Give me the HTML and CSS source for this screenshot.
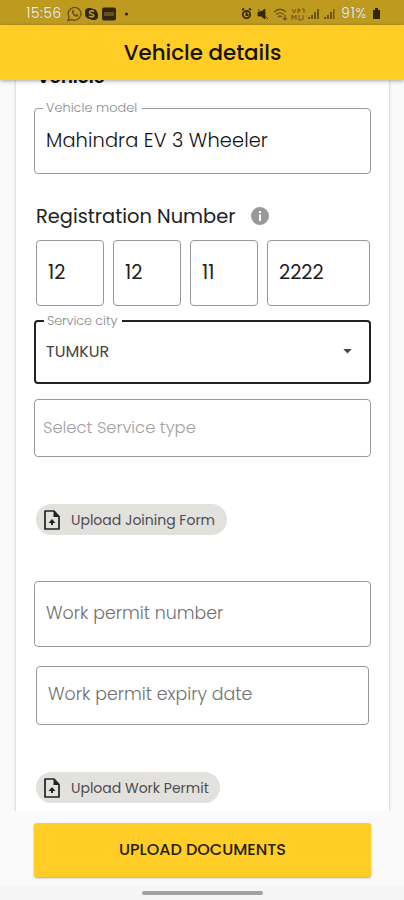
FILE: index.html
```html
<!DOCTYPE html>
<html lang="en">
<head>
<meta charset="utf-8">
<meta name="viewport" content="width=device-width, initial-scale=1">
<title>Vehicle details</title>
<link rel="stylesheet" href="styles.css">
</head>
<body>
<div class="status">
  <span class="clock">15:56</span>
  <svg class="apps" width="68" height="16" viewBox="0 0 68 16">
    <path d="M1 14.5 2 11A6.4 6.4 0 1 1 4.6 13.5Z" fill="none" stroke="#65511b" stroke-width="1.3"/>
    <path d="M5 4.5C4.3 7.5 7.3 11 10.5 10.7l1-1.6-2-1-1 .9C7.5 8.500 6.700 7.500 6.500 6.600l.8-.9-.8-1.700Z" fill="#65511b"/>
    <rect x="18" y="2" width="9" height="10" rx="4" fill="#33270c"/><rect x="22" y="5" width="9" height="9" rx="4" fill="#33270c"/><rect x="19" y="3" width="11" height="10" rx="4" fill="#33270c"/>
    <path d="M27 5.500C24.500 4 22 5 22.500 6.700c.5 1.500 4 .9 4.200 2.700.2 1.700-2.800 2-4.700.6" fill="none" stroke="#c8a42a" stroke-width="1.500"/>
    <rect x="35" y="1.500" width="14" height="13" rx="2" fill="#33270c"/><path d="M37 7h10M37 9h10" stroke="#9b8027" stroke-width="1"/>
    <circle cx="59.500" cy="8" r="1.600" fill="#33270c"/>
  </svg>
  <svg class="signals" width="97" height="16" viewBox="0 0 97 16">
    <g fill="none" stroke="#352a0e" stroke-width="1.800"><circle cx="5.500" cy="8.500" r="3.700"/><path d="M5.500 6v3h2M1 4l2-1.500M10 4 8 2.500"/></g>
    <path d="M17 6h3l4-3v10l-4-3h-3ZM17 3l10 10" fill="#352a0e" stroke="#352a0e" stroke-width=".8"/>
    <g fill="none" stroke="#69541a" stroke-width="1.200"><path d="M33 6q6-5.500 12 0M35 8.500q4-3.500 8 0M37 11q2-2 4 0M44 9v5m-2-2 2 2 2-2"/></g>
    <g fill="none" stroke="#69541a" stroke-width="1"><path d="M51 3l2 4 2-4M57 7V3q3 0 2 2l-2 1M61 3h2v4M51 14V9l2 3 2-3v5M58 9v5h3M62 9v5"/></g>
    <path d="M67 13h2v-2h-2ZM70 13h2V9h-2ZM73 13h2V6h-2ZM76 13h2V3h-2ZM83 13h2v-2h-2ZM86 13h2V9h-2ZM89 13h2V6h-2ZM92 13h1.500V3H92Z" fill="#69541a"/>
  </svg>
  <span class="percent">91%</span>
  <svg class="battery" width="9" height="12" viewBox="0 0 9 12"><path d="M1 2h2V0h3v2h2v9H1Z" fill="#33270c"/></svg>
</div>
<header class="appbar"><h1 class="title">Vehicle details</h1></header>
<main class="page">
  <section class="card">
    <h2 class="heading">Vehicle</h2>
    <fieldset class="field model"><legend class="legend">Vehicle model</legend><span>Mahindra EV 3 Wheeler</span></fieldset>
    <div class="reg"><span class="reg-label">Registration Number</span>
      <svg width="18" height="18" viewBox="0 0 18 18"><circle cx="9" cy="9" r="9" fill="#999"/><path d="M8 4h2v2H8ZM8 7.500h2V14H8Z" fill="#fff"/></svg>
    </div>
    <div class="plates"><div class="plate">12</div><div class="plate">12</div><div class="plate">11</div><div class="plate">2222</div></div>
    <fieldset class="field city"><legend class="legend">Service city</legend><span>TUMKUR</span>
      <svg width="9" height="5" viewBox="0 0 10 6"><path d="M0 0h10L5 5.500Z" fill="#444"/></svg>
    </fieldset>
    <div class="field service">Select Service type</div>
    <button class="chip joining">
      <svg width="16" height="20" viewBox="0 0 16 20"><path d="M1 1h9l5 5.500V19H1Z" fill="none" stroke="#222" stroke-width="1.700" stroke-linejoin="round"/><path d="M9.500 1v6H15Z" fill="#222"/><path d="M8 9 11.500 13H9v2H7v-2H4.500Z" fill="#222"/></svg>
      <span>Upload Joining Form</span>
    </button>
    <div class="field permit">Work permit number</div>
    <div class="field expiry">Work permit expiry date</div>
    <button class="chip work">
      <svg width="16" height="20" viewBox="0 0 16 20"><path d="M1 1h9l5 5.500V19H1Z" fill="none" stroke="#222" stroke-width="1.700" stroke-linejoin="round"/><path d="M9.500 1v6H15Z" fill="#222"/><path d="M8 9 11.500 13H9v2H7v-2H4.500Z" fill="#222"/></svg>
      <span>Upload Work Permit</span>
    </button>
  </section>
</main>
<footer class="footer"><button class="submit">UPLOAD DOCUMENTS</button></footer>
<div class="nav"><span class="handle"></span></div>
</body>
</html>
```
FILE: styles.css
```css
* { box-sizing: border-box; }
body {
  margin: 0; width: 404px; height: 900px; overflow: hidden;
  display: flex; flex-direction: column; background: #fafafa; color: #202020;
  font-family: Poppins, Inter, sans-serif; font-weight: 400; white-space: nowrap;
}
h1, h2, button, fieldset { margin: 0; padding: 0; border: 0; font: inherit; color: inherit; min-width: 0; }
svg { flex: none; }
.status { height: 25px; flex: none; display: flex; align-items: center; background: #be9b1f; padding: 2px 0 0 26px; }
.clock, .percent { color: #f1ecdc; font-size: 14px; text-shadow: 0 0 1px #6b603c; }
.clock { width: 41px; letter-spacing: .3px; }
.signals { margin-left: 106px; }
.percent { width: 30px; margin-left: 3px; letter-spacing: .6px; }
.battery { margin-left: 1px; }
.appbar { height: 55px; flex: none; display: flex; align-items: center; justify-content: center; background: #ffcd25; position: relative; box-shadow: 0 1px 4px rgba(0,0,0,.35); }
.title { font-size: 21.4px; font-weight: 500; line-height: 30px; color: #15130a; padding-left: 1px; }
.page { height: 731px; flex: none; overflow: hidden; padding: 0 15px 0 16px; }
.card { height: 740px; background: #fff; box-shadow: 0 0 3px rgba(0,0,0,.25); padding: 0 18px; display: flex; flex-direction: column; }
.heading { height: 21px; margin-top: -15px; padding-left: 3px; font-size: 18px; line-height: 24px; font-weight: 600; color: #111; }
.field { width: 337px; flex: none; border: 1.500px solid #999; border-radius: 4px; display: flex; align-items: center; padding-left: 10px; }
.legend { font-size: 12.8px; line-height: 14px; color: #888; padding: 0 5px 0 3px; margin-left: -3px; font-weight: 300; letter-spacing: .05px; }
.model { height: 73px; margin-top: 15px; padding: 12px 0 0 11px; font-size: 19.4px; align-items: flex-start; font-weight: 300; letter-spacing: .1px; line-height: 28px; color: #111; }
.reg { height: 30px; margin: 27px 0 9px; padding-left: 2px; display: flex; align-items: center; font-size: 19.4px; }
.reg-label { width: 215px; }
.plates { display: grid; grid-template-columns: 68px 68px 68px 103px; gap: 9px; padding-left: 2px; font-size: 19.4px; }
.plate { height: 66px; border: 1.500px solid #999; border-radius: 4px; display: flex; align-items: center; padding: 0 0 2px 11px; }
.city { height: 70px; margin-top: 8px; border: 2px solid #202124; padding: 12px 17px 0 10px; align-items: flex-start; justify-content: space-between; font-size: 16px; line-height: 24px; color: #444; }
.city .legend { margin-left: -2px; letter-spacing: -.1px; }
.city svg { margin-top: 9px; }
.service { height: 58px; margin-top: 15px; padding: 0 0 1px 8px; color: #a0a0a0; font-size: 16.4px; font-weight: 300; }
.chip { height: 31px; flex: none; align-self: flex-start; margin-left: 2px; display: flex; align-items: center; gap: 11px; padding: 1px 0 0 8px; border-radius: 16px; background: #e2e1de; color: #4d4d4d; font-size: 14px; }
.chip svg { margin-top: -1px; }
.joining { width: 191px; margin-top: 47px; }
.permit { height: 66px; margin-top: 46px; padding: 0 0 3px 11px; color: #707070; font-size: 17.4px; font-weight: 300; }
.expiry { width: 333px; height: 59px; margin: 19px 0 0 2px; padding: 0 0 4px 11px; color: #707070; font-size: 17.4px; font-weight: 300; }
.work { width: 184px; margin-top: 47px; }
.footer { height: 75px; flex: none; padding: 12px 33px 0 34px; }
.submit { width: 337px; height: 54px; padding-bottom: 2px; display: flex; align-items: center; justify-content: center; background: #ffcd25; border-radius: 3px; box-shadow: 0 1px 2px rgba(0,0,0,.35); font-weight: 500; font-size: 16px; color: #242005; }
.nav { flex: 1; display: flex; justify-content: center; align-items: center; background: #f5f5f5; }
.handle { width: 121px; height: 4px; border-radius: 2px; background: #a0a0a0; }
```
